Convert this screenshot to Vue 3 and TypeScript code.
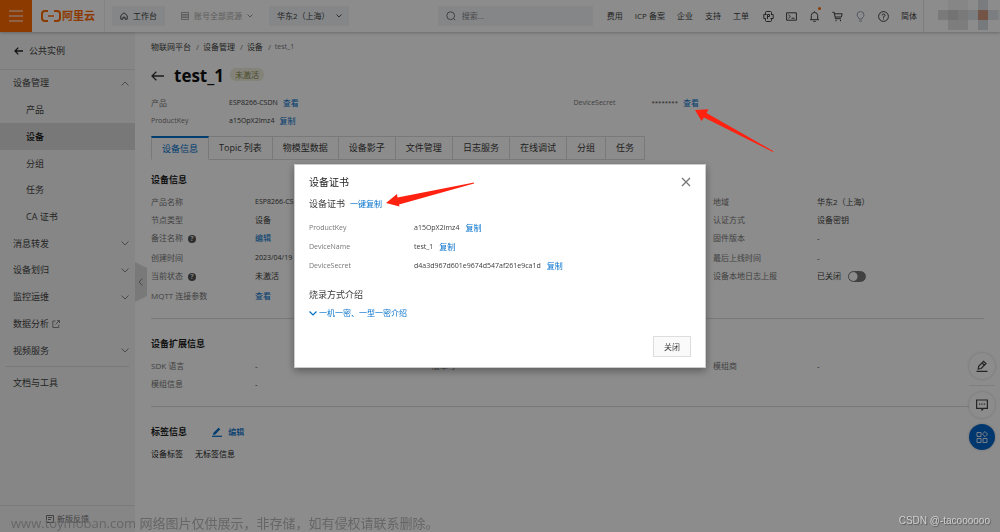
<script setup lang="ts">
import { ref } from 'vue'

interface NavItem {
  label: string
  child?: boolean
  active?: boolean
  arrow?: 'up' | 'down'
  external?: boolean
}

interface Field {
  label: string
  value: string
  col: 1 | 2 | 3
  row: number
  latin?: boolean
  link?: boolean
  help?: boolean
  toggle?: boolean
}

const topLinks = ['费用', 'ICP 备案', '企业', '支持', '工单']

const navItems: NavItem[] = [
  { label: '设备管理', arrow: 'up' },
  { label: '产品', child: true },
  { label: '设备', child: true, active: true },
  { label: '分组', child: true },
  { label: '任务', child: true },
  { label: 'CA 证书', child: true },
  { label: '消息转发', arrow: 'down' },
  { label: '设备划归', arrow: 'down' },
  { label: '监控运维', arrow: 'down' },
  { label: '数据分析', external: true },
  { label: '视频服务', arrow: 'down' },
]

const crumbs = ['物联网平台', '设备管理', '设备']
const tabs = ['设备信息', 'Topic 列表', '物模型数据', '设备影子', '文件管理', '日志服务', '在线调试', '分组', '任务']
const activeTab = ref('设备信息')

const deviceFields: Field[] = [
  { label: '产品名称', value: 'ESP8266-CSDN', col: 1, row: 1, latin: true },
  { label: '地域', value: '华东2（上海）', col: 3, row: 1 },
  { label: '节点类型', value: '设备', col: 1, row: 2 },
  { label: '认证方式', value: '设备密钥', col: 3, row: 2 },
  { label: '备注名称', value: '编辑', col: 1, row: 3, link: true, help: true },
  { label: '固件版本', value: '-', col: 3, row: 3 },
  { label: '创建时间', value: '2023/04/19', col: 1, row: 4, latin: true },
  { label: '最后上线时间', value: '-', col: 3, row: 4 },
  { label: '当前状态', value: '未激活', col: 1, row: 5, help: true },
  { label: '设备本地日志上报', value: '已关闭', col: 3, row: 5, toggle: true },
  { label: 'MQTT 连接参数', value: '查看', col: 1, row: 6, link: true },
]

const extFields: Field[] = [
  { label: 'SDK 语言', value: '-', col: 1, row: 1 },
  { label: '版本号', value: '-', col: 2, row: 1 },
  { label: '模组商', value: '-', col: 3, row: 1 },
  { label: '模组信息', value: '-', col: 1, row: 2 },
]

const certificate = [
  { label: 'ProductKey', value: 'a15OpX2Imz4' },
  { label: 'DeviceName', value: 'test_1' },
  { label: 'DeviceSecret', value: 'd4a3d967d601e9674d547af261e9ca1d' },
]

const logReport = ref(false)
const keyword = ref('')
const dialogOpen = ref(true)

/* colours of the 10px account tiles, three rows of seven */
const tiles = [
  '', '#f4f4f4', '#f4f4f4', '', '#dde1e8', '', '',
  '#dedede', '#d2d2d2', '#dcdcdc', '#e2e8ec', '#d29a80', '#dfe5e9', '#f0f2f3',
  '', '#e4e4e4', '#e4e4e4', '', '#d9dee4', '', '',
]
</script>

<template>
  <div class="shell">
    <header class="topbar">
      <button class="burger" aria-label="菜单">
        <svg viewBox="0 0 14 12" width="14" height="12"><path d="M0 1h14M0 6h14M0 11h14" stroke="#fff" stroke-width="1" /></svg>
      </button>
      <a class="logo" href="#">
        <svg viewBox="0 0 20 12" width="20" height="12" fill="none" stroke="#ff6a00" stroke-width="2">
          <path d="M7 1H4Q1 1 1 4V8Q1 11 4 11H7M13 1H16Q19 1 19 4V8Q19 11 16 11H13" />
          <path d="M7 6H13" stroke-width="1.5" />
        </svg>
        <span>阿里云</span>
      </a>
      <button class="workbench">
        <svg viewBox="0 0 10 10" width="8" height="8" fill="none" stroke="#444" stroke-width="1.2"><path d="M1 4.500L5 1l4 3.500V9H6.300V6.500H3.700V9H1z" /></svg>
        工作台
      </button>
      <label class="scope">
        <svg viewBox="0 0 8 8" width="8" height="8" fill="none" stroke="#aaa"><path d="M.5.5h7v2h-7zM.5 3h7v2h-7zM.5 5.500h7v2h-7z" /></svg>
        <select disabled aria-label="资源范围"><option>账号全部资源</option></select>
        <svg class="chev" viewBox="0 0 6 4" width="6" height="4"><path d="M.5.5L3 3L5.500.5" /></svg>
      </label>
      <label class="region">
        <select aria-label="地域"><option>华东2（上海）</option></select>
        <svg class="chev" viewBox="0 0 6 4" width="6" height="4"><path d="M.5.5L3 3L5.500.5" /></svg>
      </label>
      <label class="search">
        <svg viewBox="0 0 10 10" width="10" height="10" fill="none" stroke="#777"><circle cx="4.700" cy="4.700" r="3.900" /><path d="M7.500 7.500L9.200 9.200" /></svg>
        <input v-model="keyword" type="text" placeholder="搜索..." aria-label="搜索" />
      </label>
      <nav class="toplinks">
        <a v-for="l in topLinks" :key="l" href="#">{{ l }}</a>
      </nav>
      <div class="topicons">
        <button aria-label="应用">
          <svg viewBox="0 0 11 11"><path d="M2.500 3V1.500q0-1 1-1h4q1 0 1 1V3M2.500 8v1.500q0 1 1 1h4q1 0 1-1V8M3.500 3.500H.8v4h2M7.500 7.500h2.700v-4H8M4.500 8V3.500h2v2h-2" /></svg>
        </button>
        <button aria-label="命令行">
          <svg viewBox="0 0 11 11"><path d="M.6 1.800h9.800v7.400H.6zM2.500 3.800l1.800 1.700l-1.800 1.700M5.500 7.200h3" /></svg>
        </button>
        <button class="bell" aria-label="消息">
          <svg viewBox="0 0 11 11"><path d="M5.500 .3v1M2.300 8.500V4.500Q2.300 1.500 5.500 1.500T8.700 4.500V8.500M1 8.700h9M4.300 10.300h2.400" /></svg>
          <i class="dot"></i>
        </button>
        <button aria-label="购物车">
          <svg viewBox="0 0 11 11"><path d="M.3 1.300h1.900L3.400 7.700H9M2.500 2.800h7.700L9.300 6H3.200" /><path d="M3.500 9.500h1M8 9.500h1" stroke-width="1.600" /></svg>
        </button>
        <button class="bulb" aria-label="提示">
          <svg viewBox="0 0 11 11"><path d="M4 8V7Q2 5.900 2 4A3.500 3.500 0 0 1 9 4Q9 5.900 7 7V8zM4 10h3" /></svg>
        </button>
        <button aria-label="帮助">
          <svg viewBox="0 0 11 11"><circle cx="5.500" cy="5.500" r="4.900" /><path d="M4 4.400Q4 3 5.500 3T7 4.400Q7 5.200 5.500 5.700V6.700M5.500 7.500v1" /></svg>
        </button>
      </div>
      <a class="lang" href="#">简体</a>
      <div class="account">
        <span v-for="(c, i) in tiles" :key="i" :style="{ background: c || 'transparent' }"></span>
      </div>
    </header>

    <div class="body">
      <aside class="side">
        <a class="back" href="#">
          <svg viewBox="0 0 9 8" width="9" height="8" fill="none" stroke="#222" stroke-width="1.300"><path d="M9 4H1M4.300.6L1 4l3.300 3.400" /></svg>
          公共实例
        </a>
        <nav class="menu">
          <a v-for="n in navItems" :key="n.label" href="#" :class="{ child: n.child, active: n.active }">
            <span>{{ n.label }}</span>
            <svg v-if="n.external" class="ext" viewBox="0 0 8 8" width="8" height="8"><path d="M3.500 1H.8v6.500h6V4.700M5 .6h2.500V3M7.400.6L3.700 4.400" /></svg>
            <svg v-if="n.arrow" class="arrow" :class="n.arrow" viewBox="0 0 8 5" width="8" height="5"><path d="M.5.5L4 4L7.500.5" /></svg>
          </a>
        </nav>
        <a class="docs" href="#">文档与工具</a>
        <a class="feedback" href="#">
          <svg viewBox="0 0 8 8" width="8" height="8" fill="none" stroke="#777"><path d="M.5.5h7v7h-7zM2 2.500h4M2 4.500h3" /></svg>
          新版反馈
        </a>
        <button class="fold" aria-label="收起">
          <svg viewBox="0 0 12 40" width="12" height="40"><path d="M0 0L12 6V34L0 40z" fill="#dcdcdc" /><path d="M7.500 16.500L4 20l3.500 3.500" fill="none" stroke="#888" /></svg>
        </button>
      </aside>

      <main class="main">
        <nav class="crumbs">
          <template v-for="c in crumbs" :key="c"><a href="#">{{ c }}</a><i>/</i></template>
          <span class="latin">test_1</span>
        </nav>
        <div class="heading">
          <svg viewBox="0 0 13 10" width="13" height="10" fill="none" stroke="#333" stroke-width="1.300"><path d="M13 5H1M5.300.7L1 5l4.300 4.300" /></svg>
          <h1>test_1</h1>
          <span class="badge">未激活</span>
        </div>
        <dl class="summary">
          <div><dt>产品</dt><dd><span class="latin">ESP8266-CSDN</span><a href="#">查看</a></dd></div>
          <div><dt class="latin">DeviceSecret</dt><dd><span class="stars">********</span><a href="#">查看</a></dd></div>
          <div><dt class="latin">ProductKey</dt><dd><span class="latin">a15OpX2Imz4</span><a href="#">复制</a></dd></div>
        </dl>
        <div class="tabs" role="tablist">
          <button v-for="t in tabs" :key="t" role="tab" :aria-selected="t === activeTab" :class="{ on: t === activeTab }" @click="activeTab = t">{{ t }}</button>
        </div>

        <section>
          <h2>设备信息</h2>
          <dl class="fields">
            <div v-for="f in deviceFields" :key="f.label" :class="{ tall: f.help }" :style="{ gridColumn: f.col, gridRow: f.row }">
              <dt>{{ f.label }}<span v-if="f.help" class="help">?</span></dt>
              <dd>
                <a v-if="f.link" href="#">{{ f.value }}</a>
                <label v-else-if="f.toggle" class="switch">{{ f.value }}<input v-model="logReport" type="checkbox" role="switch" /></label>
                <span v-else :class="{ latin: f.latin }">{{ f.value }}</span>
              </dd>
            </div>
          </dl>
        </section>
        <section>
          <h2>设备扩展信息</h2>
          <dl class="fields">
            <div v-for="f in extFields" :key="f.label" :style="{ gridColumn: f.col, gridRow: f.row }">
              <dt>{{ f.label }}</dt>
              <dd>{{ f.value }}</dd>
            </div>
          </dl>
        </section>
        <section>
          <h2>
            标签信息
            <a class="edit" href="#">
              <svg viewBox="0 0 10 10" width="10" height="10"><path d="M1 8L1.500 5.700L6.500.7L8.300 2.300L3.300 7.400z" fill="#0070cc" /><path d="M0 9.300h10" stroke="#0070cc" stroke-width="1.200" /></svg>
              编辑
            </a>
          </h2>
          <p class="tags"><span>设备标签</span><span>无标签信息</span></p>
        </section>
      </main>
    </div>

    <div class="floaters">
      <button aria-label="评价">
        <svg viewBox="0 0 12 12" width="12" height="12" fill="none" stroke="#444" stroke-width="1.200"><path d="M2.200 9L2.700 6.300L7.500 1.300L10 3.500L5.200 8.500zM6 3l2.400 2.200M.5 11.300h11" /></svg>
      </button>
      <hr />
      <button aria-label="咨询">
        <svg viewBox="0 0 12 12" width="12" height="12" fill="none" stroke="#444" stroke-width="1.200"><path d="M.6 1h10.800v8.300H7.500L6 11V9.300H.6z" /><path d="M3 5.200h1.200M5.400 5.200h1.200M7.800 5.200H9" /></svg>
      </button>
      <button class="primary" aria-label="应用中心">
        <svg viewBox="0 0 12 12" width="12" height="12" fill="none" stroke="#dde8f5"><path d="M1 1.500h4v4H1zM1 7.500h4v4H1zM7 7.500h4v4H7zM9 .5l2.600 2.600L9 5.700L6.400 3.100z" /></svg>
      </button>
    </div>

    <div v-if="dialogOpen" class="mask">
      <div class="dialog" role="dialog" aria-labelledby="dlg-title">
        <div class="dlg-head">
          <h2 id="dlg-title">设备证书</h2>
          <button class="close" aria-label="关闭" @click="dialogOpen = false">
            <svg viewBox="0 0 10 10" width="10" height="10"><path d="M1 1l8 8M9 1L1 9" stroke="#777" stroke-width="1.300" /></svg>
          </button>
        </div>
        <h3>设备证书<a href="#">一键复制</a></h3>
        <dl class="cert">
          <div v-for="c in certificate" :key="c.label">
            <dt>{{ c.label }}</dt>
            <dd>{{ c.value }}<a href="#">复制</a></dd>
          </div>
        </dl>
        <h3>烧录方式介绍</h3>
        <a class="more" href="#">
          <svg viewBox="0 0 8 5" width="8" height="5"><path d="M.5.5L4 4L7.500.5" fill="none" stroke="#0070cc" stroke-width="1.200" /></svg>
          一机一密、一型一密介绍
        </a>
        <div class="dlg-foot"><button @click="dialogOpen = false">关闭</button></div>
      </div>
    </div>

    <svg class="pointer to-secret" viewBox="0 0 80 44" width="80" height="44"><path d="M1 1L14.500 .3L12.500 4L79.500 42.300L79 43L10 8.500L7.500 12z" fill="#ff2210" /></svg>
    <svg class="pointer to-copy" viewBox="0 0 90 26" width="90" height="26"><path d="M0 21L11 12L11.500 15.500L88 .5V1.500L13 22.500L13.500 24.500z" fill="#ff2210" /></svg>
    <p class="note">www.toymoban.com 网络图片仅供展示，非存储，如有侵权请联系删除。</p>
    <p class="credit">CSDN @-tacoooooo</p>
  </div>
</template>

<style>
body {
  margin: 0;
  background: #fff;
}
</style>

<style scoped>
.shell {
  position: relative;
  display: flex;
  flex-direction: column;
  height: 100vh;
  overflow: hidden;
  font: 8px/18px 'Open Sans', 'Noto Sans CJK SC', sans-serif;
  color: #3c3c3c;
}
.shell * { box-sizing: border-box; }
h1, h2, h3, p, dl, dt, dd { margin: 0; }
a { color: #0070cc; text-decoration: none; }
button { border: 0; padding: 0; background: none; font: inherit; color: inherit; }
i { font-style: normal; }
svg { flex: none; }
.latin { font-size: 7px; }
.stars { font-size: 6px; }

.topbar {
  position: relative;
  z-index: 1;
  display: flex;
  align-items: center;
  height: 32px;
  flex: none;
  background: #fff;
  box-shadow: 0 1px 3px rgba(0, 0, 0, 0.25);
}
.burger { display: flex; align-items: center; justify-content: center; width: 32px; height: 32px; background: #ff6a00; }
.logo {
  display: flex;
  align-items: center;
  gap: 1px;
  width: 73px;
  height: 32px;
  padding-left: 9px;
  border-right: 1px solid #eee;
  color: #ff6a00;
  font-size: 11px;
  font-weight: 700;
  white-space: nowrap;
}
.workbench {
  display: flex;
  align-items: center;
  gap: 5px;
  height: 20px;
  margin-left: 7px;
  padding: 0 8px;
  background: #f1f4f8;
}
select {
  appearance: none;
  border: 0;
  padding: 0;
  background: none;
  font: inherit;
  color: inherit;
  opacity: 1;
}
.scope, .region, .search { display: flex; align-items: center; height: 20px; }
.scope { gap: 5px; margin-left: 16px; color: #aaa; }
.region { gap: 6px; margin-left: 16px; padding: 0 7px 0 8px; background: #f1f4f8; }
.chev { fill: none; stroke: #555; stroke-width: 1; }
.scope .chev { stroke: #999; }
.search { gap: 6px; width: 155px; margin-left: auto; padding: 0 8px; background: #f1f4f8; }
.search input { flex: 1; min-width: 0; border: 0; padding: 0; background: none; font: inherit; outline: 0; }
.search input::placeholder { color: #888; }
.toplinks { display: flex; gap: 12px; margin-left: 14px; }
.toplinks a, .lang { color: #3c3c3c; white-space: nowrap; }
.topicons { display: flex; gap: 12px; margin: 0 12px 0 14px; }
.topicons button { position: relative; display: flex; }
.topicons svg { width: 11px; height: 11px; fill: none; stroke: #444; stroke-width: 1; }
.topicons .bulb svg { stroke: #9aa5b5; }
.dot { position: absolute; top: -4px; right: -1px; width: 3px; height: 3px; border-radius: 50%; background: #ff6a00; }
.account {
  display: grid;
  grid-template-columns: repeat(7, 10px);
  grid-template-rows: repeat(3, 10px);
  align-content: start;
  width: 77px;
  height: 32px;
  margin-left: 6px;
  padding-left: 14px;
  border-left: 1px solid #e4e4e4;
  overflow: hidden;
}

.body { display: flex; flex: 1; min-height: 0; }
.side {
  position: relative;
  display: flex;
  flex-direction: column;
  width: 135px;
  flex: none;
  background: #f5f5f5;
  font-size: 9px;
}
.side a { color: #444; }
.back {
  display: flex;
  align-items: center;
  gap: 6px;
  height: 38px;
  padding-left: 14px;
  border-bottom: 1px solid #e0e0e0;
}
.menu {
  display: grid;
  grid-template-rows: repeat(11, 1fr);
  height: 294px;
}
.menu a { display: flex; align-items: center; padding: 0 6px 0 13px; }
.menu .child { padding-left: 26px; }
.menu .active { background: #dadada; color: #111; font-weight: 500; }
.menu svg { fill: none; stroke: #888; }
.ext { margin-left: 3px; }
.arrow { margin-left: auto; }
.up { transform: rotate(180deg); }
.docs { margin: 2px 6px 0 5px; padding: 7px 8px; border-top: 1px solid #ddd; }
.side .feedback {
  display: flex;
  align-items: center;
  justify-content: center;
  gap: 3px;
  height: 27px;
  margin-top: auto;
  border-top: 1px solid #e0e0e0;
  color: #777;
  font-size: 8px;
}
.fold { position: absolute; left: 100%; top: 230px; display: flex; }

.main { flex: 1; min-width: 0; padding: 8px 16px 0; }
.crumbs { display: flex; line-height: 14px; margin-bottom: 10px; color: #777; }
.crumbs a { color: #3c3c3c; }
.crumbs i { margin: 0 4px 0 5px; }
.heading { display: flex; align-items: center; gap: 10px; height: 24px; margin-bottom: 6px; }
h1 { font-size: 17px; line-height: 24px; color: #111; }
.badge {
  margin-left: -4px;
  margin-bottom: 4px;
  padding: 0 5px;
  border-radius: 6px;
  background: #eeeede;
  color: #8a8a4a;
  line-height: 13px;
}
dt { color: #777; }
dd { display: flex; }
dd a { margin-left: 5px; }
.summary { display: grid; grid-template-columns: 1fr 1fr; column-gap: 12px; }
.summary div { display: grid; grid-template-columns: 78px 1fr; }
.tabs { display: flex; margin-top: 6px; margin-bottom: 13px; }
.tabs button {
  height: 24px;
  padding: 0 10px;
  border: 1px solid #ddd;
  border-left-width: 0;
  font-size: 9px;
  white-space: nowrap;
}
.tabs .on {
  border-left-width: 1px;
  border-top: 2px solid #0070cc;
  border-bottom-color: transparent;
  color: #0070cc;
}
section { padding-bottom: 13px; margin-bottom: 18px; border-bottom: 1px solid #dcdcdc; }
section:last-child { border: 0; }
h2 { margin-bottom: 6px; font-size: 9px; line-height: 14px; color: #222; }
.fields { display: grid; grid-template-columns: repeat(3, 1fr); column-gap: 10px; }
.fields > div { display: grid; grid-template-columns: 104px 1fr; height: 18px; }
.fields > .tall { height: 20px; }
.fields dd a { margin-left: 0; }
.help {
  display: inline-block;
  width: 8px;
  margin-left: 5px;
  border-radius: 50%;
  background: #555;
  color: #ddd;
  font-size: 7px;
  font-weight: 700;
  line-height: 8px;
  text-align: center;
}
.switch { display: flex; align-items: center; gap: 7px; height: 18px; }
.switch input {
  appearance: none;
  width: 18px;
  height: 11px;
  margin: 0;
  border: 1px solid #777;
  border-radius: 6px;
  background: radial-gradient(circle at 4px 50%, #fff 4px, #777 5px);
}
.edit { display: inline-flex; align-items: center; gap: 6px; margin-left: 23px; font-size: 8px; line-height: 14px; font-weight: 500; vertical-align: top; }
.tags { display: flex; gap: 12px; color: #222; }

.floaters {
  position: absolute;
  right: 5px;
  bottom: 82px;
  display: flex;
  flex-direction: column;
  align-items: center;
  gap: 6px;
}
.floaters button {
  display: flex;
  align-items: center;
  justify-content: center;
  width: 26px;
  height: 26px;
  border-radius: 50%;
  background: #fff;
  box-shadow: 0 0 3px rgba(0, 0, 0, 0.2);
}
.floaters .primary { background: #0064c8; }
.floaters hr { width: 26px; margin: 0; border: 0; border-top: 1px solid #e8e8e8; }

.mask {
  position: fixed;
  inset: 0;
  z-index: 2;
  display: flex;
  align-items: center;
  justify-content: center;
  background: rgba(0, 0, 0, 0.45);
}
.dialog {
  width: 412px;
  max-width: 90%;
  padding: 10px 14px 10px;
  border: 1px solid #ccc;
  background: #fff;
  box-shadow: 0 3px 8px rgba(0, 0, 0, 0.35);
}
.dlg-head { display: flex; align-items: center; justify-content: space-between; margin-bottom: 8px; }
.dlg-head h2 { margin: 0; font-size: 10px; font-weight: 400; }
.close { display: flex; }
h3 { font-size: 9px; font-weight: 400; line-height: 14px; }
h3 a { margin-left: 5px; font-size: 8px; }
.cert { margin: 7px 0 13px; font-size: 7px; line-height: 19px; }
.cert div { display: grid; grid-template-columns: 105px 1fr; }
.cert a { margin-left: 6px; font-size: 8px; }
.more { display: flex; align-items: center; gap: 2px; margin-top: 2px; }
.dlg-foot { display: flex; justify-content: flex-end; margin-top: 14px; }
.dlg-foot button { width: 38px; height: 21px; border: 1px solid #ddd; background: #fafafa; }

.pointer { position: absolute; z-index: 3; }
.to-secret { left: 694px; top: 109px; }
.to-copy { left: 386px; top: 182px; }
.note {
  position: absolute;
  z-index: 3;
  left: 11px;
  bottom: 0;
  font-size: 13px;
  color: #666;
  white-space: nowrap;
}
.credit {
  position: absolute;
  z-index: 3;
  right: 10px;
  bottom: 2px;
  font-family: 'Liberation Sans', sans-serif;
  font-size: 10px;
  color: #d0d0d0;
  text-shadow: 1px 1px 1px #555;
}
</style>
